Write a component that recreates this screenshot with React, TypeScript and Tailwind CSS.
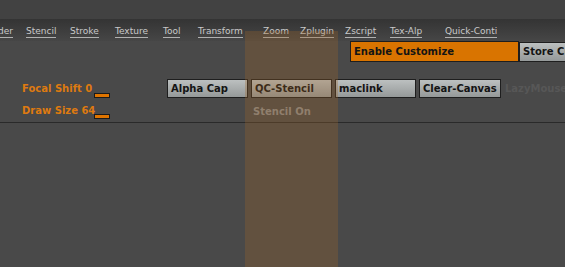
import React from 'react';

const menu = [
  { label: 'der', w: 'w-[28px] ml-[-2px]' },
  { label: 'Stencil', w: 'w-[44px]' },
  { label: 'Stroke', w: 'w-[45px]' },
  { label: 'Texture', w: 'w-[48px]' },
  { label: 'Tool', w: 'w-[35px]' },
  { label: 'Transform', w: 'w-[65px]' },
  { label: 'Zoom', w: 'w-[37px]' },
  { label: 'Zplugin', w: 'w-[45px]' },
  { label: 'Zscript', w: 'w-[45px]' },
  { label: 'Tex-Alp', w: 'w-[55px]' },
  { label: 'Quick-Conti', w: 'w-[70px]' },
];

const sans = { fontFamily: '"DejaVu Sans", "Liberation Sans", sans-serif' };

const GrayButton = ({ label, w }: { label: string; w: string }) => (
  <div
    className={`${w} h-[19px] shrink-0 border border-[#1e1e1e] bg-gradient-to-b from-[#bcc0c0] to-[#959999] pl-[3px] flex items-center text-[10px] font-bold text-[#141414]`}
  >
    {label}
  </div>
);

export default function App() {
  return (
    <div className="relative w-[565px] h-[267px] overflow-hidden bg-[#494949]" style={sans}>
      {/* top strip */}
      <div className="h-[19px] bg-[#424242]" />

      {/* menu bar */}
      <div className="h-[22px] pt-[3px] flex items-center whitespace-nowrap bg-gradient-to-b from-[#343434] to-[#464646] text-[9px] text-[#c9c9c9]">
        {menu.map(m => (
          <div key={m.label} className={`${m.w} shrink-0`}>
            <span className="border-b border-[#b0b0b0] leading-[11px] pb-[1px]">{m.label}</span>
          </div>
        ))}
      </div>

      {/* customize row */}
      <div className="h-[21px] flex items-center pl-[350px] whitespace-nowrap">
        <div className="w-[169px] h-[21px] shrink-0 border border-[#1e1e1e] bg-[#d97400] pl-[3px] flex items-center text-[10px] font-bold text-[#141414]">
          Enable Customize
        </div>
        <div className="w-[60px] h-[20px] shrink-0 border border-[#1e1e1e] bg-gradient-to-b from-[#bcc0c0] to-[#959999] pl-[3px] flex items-center text-[10px] font-bold text-[#141414]">
          Store Custom
        </div>
      </div>

      {/* buttons row */}
      <div className="mt-[17px] h-[19px] flex items-center whitespace-nowrap">
        <div className="w-[167px] shrink-0 pl-[22px] flex items-end">
          <span className="text-[10px] font-bold text-[#de7a10] leading-[12px]">Focal Shift 0</span>
          <span className="w-[16px] h-[5px] ml-[2px] mb-[-3px] bg-[#de7400] border border-[#1a1a1a]" />
        </div>
        <div className="flex gap-[3px]">
          <GrayButton label="Alpha Cap" w="w-[81px]" />
          <GrayButton label="QC-Stencil" w="w-[81px]" />
          <GrayButton label="maclink" w="w-[81px]" />
          <GrayButton label="Clear-Canvas" w="w-[82px]" />
        </div>
        <span className="ml-[4px] text-[10px] font-bold text-[#575757]">LazyMouse</span>
      </div>

      {/* second row */}
      <div className="mt-[5px] h-[16px] flex items-center whitespace-nowrap">
        <div className="w-[253px] shrink-0 pl-[22px] flex items-end">
          <span className="text-[10px] font-bold text-[#de7a10] leading-[12px]">Draw Size 64</span>
          <span className="w-[16px] h-[5px] ml-[-1px] mb-[-2px] bg-[#de7400] border border-[#1a1a1a]" />
        </div>
        <span className="text-[10px] font-bold text-[#8c8c8c]">Stencil On</span>
      </div>

      {/* divider */}
      <div className="mt-[3px] h-[1px] bg-[#2a2a2a]" />

      {/* highlight column overlay */}
      <div className="absolute left-[245px] top-[31px] bottom-0 w-[93px] bg-[#9a6228]/30 pointer-events-none" />
    </div>
  );
}
